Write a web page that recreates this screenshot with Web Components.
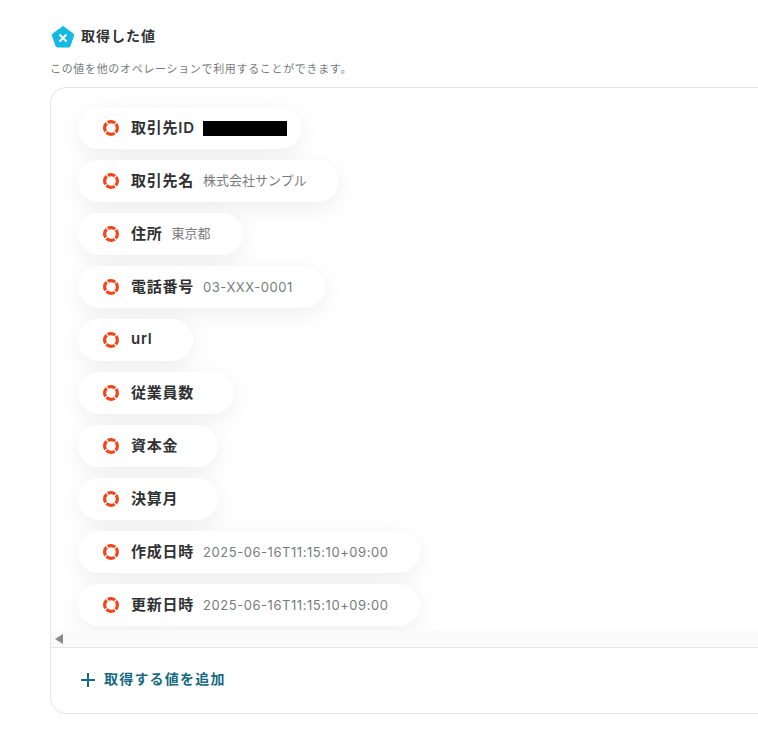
<!DOCTYPE html>
<html lang="ja">
<head>
<meta charset="utf-8">
<style>
	html, body {
		margin: 0;
		height: 100%;
		overflow: hidden;
		background: #fff;
	}
	body {
		font-family: Inter, "Noto Sans CJK JP", "Noto Sans", sans-serif;
	}
</style>
</head>
<body>
<output-panel title-text="取得した値" note="この値を他のオペレーションで利用することができます。" add-label="取得する値を追加">
	<value-pill label="取引先ID" masked></value-pill>
	<value-pill label="取引先名" value="株式会社サンプル"></value-pill>
	<value-pill label="住所" value="東京都"></value-pill>
	<value-pill label="電話番号" value="03-XXX-0001"></value-pill>
	<value-pill label="url"></value-pill>
	<value-pill label="従業員数"></value-pill>
	<value-pill label="資本金"></value-pill>
	<value-pill label="決算月"></value-pill>
	<value-pill label="作成日時" value="2025-06-16T11:15:10+09:00"></value-pill>
	<value-pill label="更新日時" value="2025-06-16T11:15:10+09:00"></value-pill>
</output-panel>

<script>
class ValuePill extends HTMLElement {
	constructor() {
		super();
		this.attachShadow({ mode: 'open' });
	}

	connectedCallback() {
		const value = this.getAttribute('value');
		let extra = '';
		if (this.hasAttribute('masked')) {
			extra = '<span class="mask"></span>';
		} else if (value) {
			const latin = /^[\x00-\x7f]+$/.test(value);
			extra = `<span class="value${latin ? ' latin' : ''}">${value}</span>`;
		}
		this.shadowRoot.innerHTML = `
<style>
	:host {
		display: flex;
		align-items: center;
		width: fit-content;
		height: 42px;
		padding: 0 32px 0 24px;
		box-sizing: border-box;
		border-radius: 21px;
		background: #fff;
		box-shadow: 0 6px 24px rgba(0, 0, 0, 0.07);
	}
	:host([masked]) {
		padding-right: 14px;
	}
	:host(:not([value]):not([masked])) {
		padding-right: 40px;
	}
	svg {
		flex: none;
		width: 18px;
		height: 18px;
	}
	.label {
		margin: -4px 0 0 11px;
		font-size: 15px;
		font-weight: 600;
		letter-spacing: 0.75px;
		color: #2f3133;
		white-space: nowrap;
	}
	.value {
		margin: -3px 0 0 9px;
		font-size: 13px;
		color: #787b7d;
		white-space: nowrap;
	}
	.latin {
		margin-top: -1px;
		letter-spacing: 0.55px;
	}
	.mask {
		margin-left: 8px;
		width: 84px;
		height: 15px;
		background: #000;
	}
</style>
<svg viewBox="0 0 18 18">
	<circle cx="9" cy="9" r="6.4" fill="none" stroke="#f4451a" stroke-width="3.2"
		stroke-dasharray="8.85 1.2" stroke-dashoffset="4.42" transform="rotate(-90 9 9)"/>
</svg>
<span class="label">${this.getAttribute('label')}</span>${extra}`;
	}
}
customElements.define('value-pill', ValuePill);

class OutputPanel extends HTMLElement {
	constructor() {
		super();
		this.attachShadow({ mode: 'open' });
	}

	connectedCallback() {
		this.shadowRoot.innerHTML = `
<style>
	:host {
		display: block;
		width: 800px;
		padding: 24px 0 0 50px;
	}
	.heading {
		display: flex;
		align-items: center;
		gap: 6px;
		margin-left: 1px;
		height: 26px;
		font-size: 14px;
		font-weight: 600;
		letter-spacing: 1px;
		color: #2f3133;
	}
	.heading span {
		margin-top: -5px;
	}
	.note {
		margin-top: 10px;
		height: 18px;
		line-height: 18px;
		font-size: 11px;
		letter-spacing: 0.67px;
		color: #787b7d;
		white-space: nowrap;
	}
	.card {
		margin-top: 9px;
		border: 1px solid #e3e5e6;
		border-radius: 16px;
	}
	.list {
		display: flex;
		flex-direction: column;
		gap: 11px;
		padding: 19px 0 5px 27px;
		overflow: hidden;
	}
	.scrollbar {
		display: flex;
		align-items: center;
		height: 16px;
		padding-left: 4px;
		background: #fafafa;
		border-bottom: 1px solid #e3e5e6;
	}
	.arrow {
		width: 0;
		height: 0;
		border-style: solid;
		border-width: 5px 8px 5px 0;
		border-color: transparent #8a8a8a transparent transparent;
	}
	.add {
		display: flex;
		align-items: center;
		gap: 8px;
		height: 65px;
		padding-left: 29px;
		font-size: 14px;
		font-weight: 600;
		letter-spacing: 1.2px;
		color: #166a82;
	}
	.add span {
		margin-top: -5px;
	}
	.add svg {
		width: 16px;
		height: 16px;
		margin-top: -1px;
	}
</style>
<div class="heading">
	<svg width="24" height="24" viewBox="0 0 24 24">
		<path d="M12 1.5 L22.2 8.9 Q23 9.5 22.7 10.4 L19 21 Q18.7 22 17.6 22 H6.4 Q5.3 22 5 21 L1.3 10.4 Q1 9.5 1.8 8.9 Z" fill="#12b9e3" stroke="#12b9e3" stroke-linejoin="round"/>
		<path d="M8.5 9.5 L15.5 16.5 M15.5 9.5 L8.5 16.5" stroke="#fff" stroke-width="2"/>
	</svg>
	<span>${this.getAttribute('title-text')}</span>
</div>
<div class="note">${this.getAttribute('note')}</div>
<div class="card">
	<div class="list"><slot></slot></div>
	<div class="scrollbar"><span class="arrow"></span></div>
	<div class="add">
		<svg viewBox="0 0 16 16"><path d="M8 1 V15 M1 8 H15" stroke="#166a82" stroke-width="2"/></svg>
		<span>${this.getAttribute('add-label')}</span>
	</div>
</div>`;
	}
}
customElements.define('output-panel', OutputPanel);
</script>
</body>
</html>
